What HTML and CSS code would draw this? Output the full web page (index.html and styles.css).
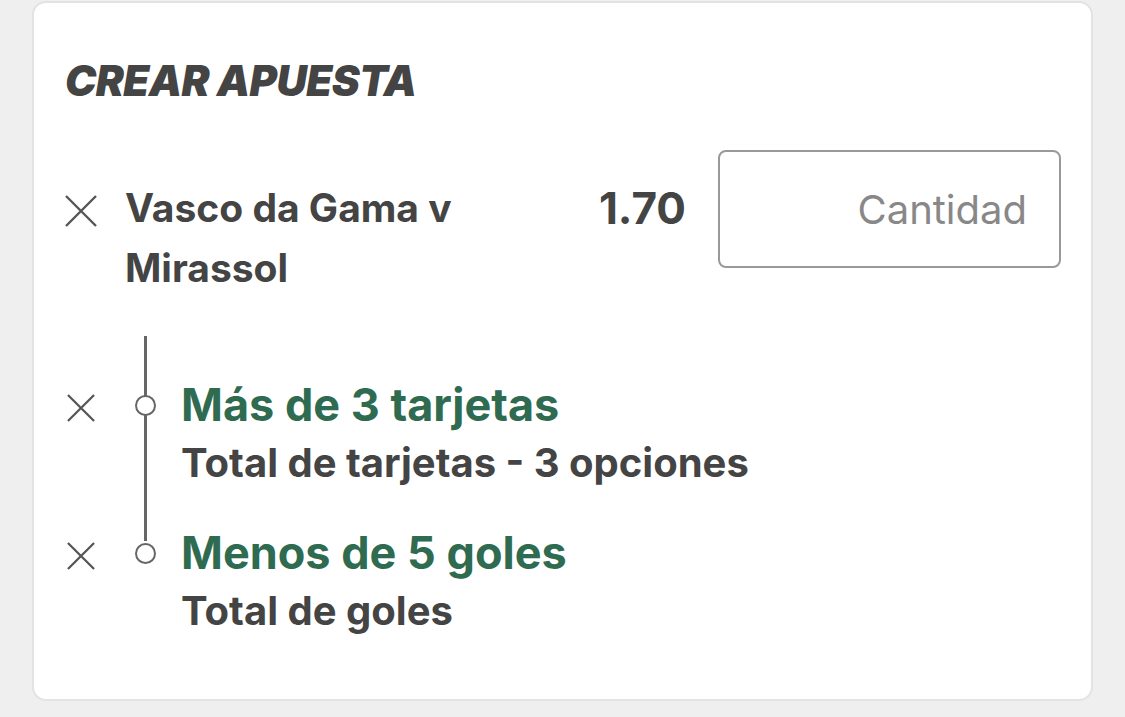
FILE: index.html
```html
<!DOCTYPE html>
<html lang="es">
<head>
    <meta charset="UTF-8">
    <meta name="viewport" content="width=device-width, initial-scale=1.0">
    <title>Crear apuesta</title>
    <link rel="stylesheet" href="styles.css">
</head>
<body>
    <div class="card">
        <h1 class="card-title">CREAR APUESTA</h1>

        <div class="bet-row">
            <button type="button" class="remove-btn big">
                <svg viewBox="0 0 32 32" width="32" height="32"><path d="M1 1 L31 31 M31 1 L1 31" /></svg>
            </button>
            <div class="match-name">Vasco da Gama v Mirassol</div>
            <div class="odds">1.70</div>
            <input type="text" class="stake-input" placeholder="Cantidad" />
        </div>

        <div class="legs">
            <div class="leg">
                <button type="button" class="remove-btn">
                    <svg viewBox="0 0 30 30" width="30" height="28"><path d="M1 1 L29 29 M29 1 L1 29" /></svg>
                </button>
                <div class="leg-dot"></div>
                <div class="leg-text">
                    <div class="leg-pick">Más de 3 tarjetas</div>
                    <div class="leg-market">Total de tarjetas - 3 opciones</div>
                </div>
            </div>
            <div class="leg">
                <button type="button" class="remove-btn">
                    <svg viewBox="0 0 30 30" width="30" height="28"><path d="M1 1 L29 29 M29 1 L1 29" /></svg>
                </button>
                <div class="leg-dot"></div>
                <div class="leg-text">
                    <div class="leg-pick">Menos de 5 goles</div>
                    <div class="leg-market">Total de goles</div>
                </div>
            </div>
        </div>
    </div>
</body>
</html>
```

FILE: styles.css
```css
body {
    margin: 0;
    background-color: #efefef;
    font-family: Inter, "Noto Sans", sans-serif;
    color: #444;
}
.card {
    margin: 1px 32px 0;
    height: 700px;
    box-sizing: border-box;
    background-color: #fff;
    border: 2px solid #e3e3e3;
    border-radius: 14px;
    padding: 56px 30px 0 31px;
}
.card-title {
    margin: 0;
    font-size: 42px;
    line-height: 44px;
    font-weight: 900;
    font-style: italic;
    letter-spacing: -0.6px;
    color: #444;
}
.bet-row {
    display: flex;
    align-items: flex-start;
    margin-top: 47px;
}
.remove-btn {
    background: none;
    border: none;
    padding: 0;
    cursor: pointer;
    display: flex;
}
.remove-btn svg {
    stroke: #555;
    stroke-width: 2.4;
    fill: none;
}
.remove-btn.big {
    margin-top: 45px;
}
.match-name {
    flex: 1;
    margin-left: 28px;
    margin-top: 28px;
    font-size: 39px;
    line-height: 60px;
    font-weight: 700;
}
.odds {
    margin-top: 28px;
    margin-right: 32px;
    font-size: 44px;
    line-height: 60px;
    font-weight: 700;
}
.stake-input {
    width: 343px;
    height: 118px;
    box-sizing: border-box;
    border: 2px solid #999;
    border-radius: 8px;
    padding: 0 32px;
    font-family: Inter, "Noto Sans", sans-serif;
    font-size: 40px;
    text-align: right;
    color: #444;
}
.stake-input::placeholder {
    color: #888;
}
.legs {
    position: relative;
    margin-top: 38px;
    padding-top: 41px;
}
/* vertical line joining the legs */
.legs::before {
    content: "";
    position: absolute;
    left: 79px;
    top: 0;
    height: 205px;
    width: 3px;
    background-color: #666;
}
.leg {
    display: flex;
    align-items: flex-start;
    margin-bottom: 32px;
}
.leg .remove-btn {
    margin-top: 17px;
    margin-left: 1px;
}
.leg-dot {
    position: relative;
    width: 17px;
    height: 17px;
    border: 2.5px solid #666;
    border-radius: 50%;
    background-color: #fff;
    margin: 18px 0 0 39px;
}
.leg-text {
    margin-left: 25px;
}
.leg-pick {
    font-size: 45px;
    line-height: 56px;
    font-weight: 700;
    color: #2f6b50;
}
.leg-market {
    font-size: 40px;
    line-height: 60px;
    font-weight: 700;
}
```
